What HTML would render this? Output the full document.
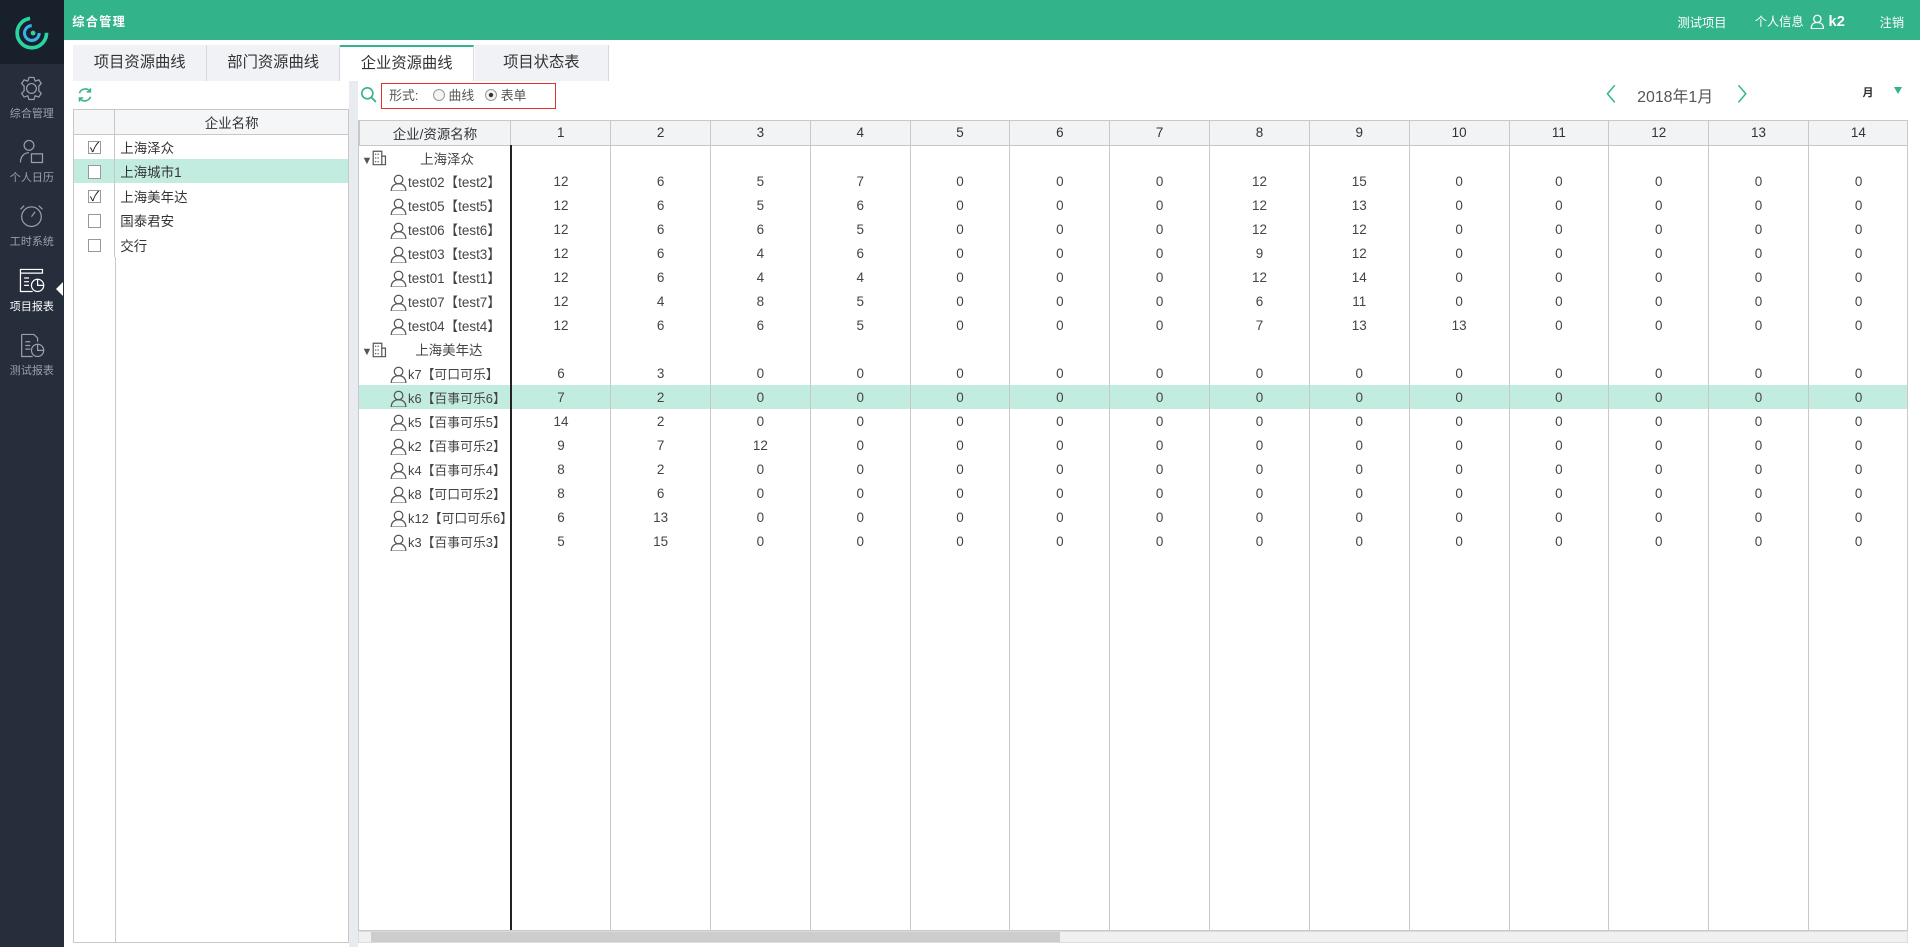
<!DOCTYPE html>
<html><head><meta charset="utf-8">
<style>
*{box-sizing:border-box;margin:0;padding:0}
html,body{width:1920px;height:947px;overflow:hidden;background:#fff}
#w{position:absolute;left:0;top:0;width:1568px;height:773px;zoom:1.22449;font-family:"Liberation Sans","Noto Sans CJK SC",sans-serif;color:#333;font-size:11px}
.a{position:absolute}
#side{left:0;top:0;width:52px;height:773px;background:#262e3b}
#logo{left:0;top:0;width:52px;height:52px;background:#17202b}
.nav{left:0;width:52px;text-align:center;color:#9aa0a8;font-size:9px}
.nav svg{display:block;margin:0 auto 3px}
#hdr{left:52px;top:0;width:1516px;height:33px;background:#33b38a;color:#fff}
.tab{top:37px;height:29px;width:109px;background:#f0f2f5;border-right:1px solid #d6d9de;text-align:center;line-height:29px;font-size:12.5px;color:#333}
.tab.on{background:#fff;border-top:2px solid #33b38a;line-height:27px}
#lp{left:60px;top:89px;width:225px;height:681px;border:1px solid #c8c8c8}
#lp table{border-collapse:collapse;width:100%}
#lp td{height:20px;border-bottom:1px solid transparent}
.cb{display:inline-block;width:11px;height:11px;border:1px solid #999;background:#fff;vertical-align:middle;position:relative;font-size:11px;line-height:9px;text-align:center;color:#222}
#split{left:285px;top:66px;width:7px;height:707px;background:#e8ebf0}
#tw{left:292px;top:98px;width:1266px;height:662px;border:1px solid #c8c8c8;overflow:hidden}
#t{border-collapse:collapse;table-layout:fixed;width:1266px}
#t th{height:20px;background:#f2f3f5;font-weight:normal;border:1px solid #c8c8c8;border-top:0;font-size:11px;color:#333;padding:0}
#t td{height:19.6px;border-left:1px solid #c8c8c8;text-align:center;font-size:11px;color:#444;white-space:nowrap;padding:0}
#t td:first-child{border-left:0;text-align:left;border-right:2px solid #222}
#t tr.hl td{background:#c3ece0}
#t tr.f td{height:320px}
.ps{display:inline-block;vertical-align:-3px;margin-right:1px}
</style></head><body><div id="w">
<div class="a" id="side"></div>
<div class="a" id="logo"><svg width="52" height="52" viewBox="0 0 52 52"><circle cx="26" cy="27" r="12" fill="none" stroke="#2ad4a0" stroke-width="3" stroke-dasharray="55 20"/><circle cx="26" cy="27" r="6" fill="none" stroke="#3ab0e8" stroke-width="2.5" stroke-dasharray="28 10"/><circle cx="27" cy="27" r="2" fill="#2ad4a0"/></svg></div>
<div class="a nav" style="top:61px"><svg width="22" height="22" viewBox="0 0 22 22"><circle cx="11" cy="11" r="4" fill="none" stroke="#9aa0a8"/><path d="M9 2h4l1 3 3-1 2 3-2 2 0 4 2 2-2 3-3-1-1 3h-4l-1-3-3 1-2-3 2-2v-4l-2-2 2-3 3 1z" fill="none" stroke="#9aa0a8"/></svg>综合管理</div>
<div class="a nav" style="top:113px"><svg width="22" height="22" viewBox="0 0 22 22"><circle cx="9" cy="6" r="4" fill="none" stroke="#9aa0a8"/><path d="M2 20c0-5 3-8 7-8M11 13h9v7h-9z" fill="none" stroke="#9aa0a8"/></svg>个人日历</div>
<div class="a nav" style="top:165px"><svg width="22" height="22" viewBox="0 0 22 22"><circle cx="11" cy="12" r="8" fill="none" stroke="#9aa0a8"/><path d="M11 12l3-4M5 3l-3 3M17 3l3 3" stroke="#9aa0a8" fill="none"/></svg>工时系统</div>
<div class="a nav" style="top:218px;color:#fff"><svg width="22" height="22" viewBox="0 0 22 22"><path d="M2 2h18v3H2zM2 5v15h10" fill="none" stroke="#fff"/><path d="M5 9h4M5 12h4M5 15h4" stroke="#fff"/><circle cx="16" cy="15" r="5" fill="none" stroke="#fff"/><path d="M16 10v5h5" stroke="#fff" fill="none"/></svg>项目报表</div>
<div class="a" style="left:46px;top:230px;width:0;height:0;border:6px solid transparent;border-right-color:#fff;border-left:0"></div>
<div class="a nav" style="top:271px"><svg width="22" height="22" viewBox="0 0 22 22"><path d="M3 2h10l3 3v3M3 2v18h9" fill="none" stroke="#9aa0a8"/><path d="M6 8h4M6 11h4M6 14h4" stroke="#9aa0a8"/><circle cx="16" cy="15" r="5" fill="none" stroke="#9aa0a8"/><path d="M16 10v5h5" stroke="#9aa0a8" fill="none"/></svg>测试报表</div>
<div class="a" id="hdr"><span class="a" style="left:7px;top:10px;font-size:10px;font-weight:bold;letter-spacing:1px">综合管理</span>
<span class="a" style="left:1318px;top:11px;font-size:10px;white-space:nowrap">测试项目</span>
<span class="a" style="left:1381px;top:10px;font-size:10px;white-space:nowrap">个人信息&nbsp;&nbsp;<svg width="12" height="12" viewBox="0 0 12 12" style="vertical-align:-2px"><circle cx="6" cy="4" r="3" fill="none" stroke="#fff"/><path d="M1 12c0-4 2-5 5-5s5 1 5 5z" fill="none" stroke="#fff"/></svg> <b style="font-size:12px">k2</b></span>
<span class="a" style="left:1483px;top:11px;font-size:10px">注销</span></div>
<div class="a tab" style="left:60px">项目资源曲线</div>
<div class="a tab" style="left:169px">部门资源曲线</div>
<div class="a tab on" style="left:278px">企业资源曲线</div>
<div class="a tab" style="left:388px">项目状态表</div>
<svg class="a" style="left:63px;top:71px" width="13" height="13" viewBox="0 0 13 13"><path d="M2 5a5 5 0 0 1 9-1M11 8a5 5 0 0 1-9 1" fill="none" stroke="#33b38a" stroke-width="1.3"/><path d="M11 1v3h-3M2 12V9h3" fill="none" stroke="#33b38a" stroke-width="1.2"/></svg>
<div class="a" id="lp"><table>
<tr style="background:#f5f6f7"><td style="width:33px;border-right:1px solid #c8c8c8;border-bottom:1px solid #c8c8c8"></td><td style="text-align:center;border-bottom:1px solid #c8c8c8">企业名称</td></tr>
<tr><td style="text-align:center;border-right:1px solid #c8c8c8"><span class="cb">✓</span></td><td style="padding-left:4px">上海泽众</td></tr>
<tr style="background:#c3ece0"><td style="text-align:center;border-right:1px solid #c8c8c8"><span class="cb"></span></td><td style="padding-left:4px">上海城市1</td></tr>
<tr><td style="text-align:center;border-right:1px solid #c8c8c8"><span class="cb">✓</span></td><td style="padding-left:4px">上海美年达</td></tr>
<tr><td style="text-align:center;border-right:1px solid #c8c8c8"><span class="cb"></span></td><td style="padding-left:4px">国泰君安</td></tr>
<tr><td style="text-align:center;border-right:1px solid #c8c8c8"><span class="cb"></span></td><td style="padding-left:4px">交行</td></tr>
</table><div class="a" style="left:33px;top:120px;width:1px;height:560px;background:#c8c8c8"></div></div>
<div class="a" id="split"></div>
<svg class="a" style="left:294px;top:70px" width="14" height="14" viewBox="0 0 14 14"><circle cx="6" cy="6" r="4.5" fill="none" stroke="#33b38a" stroke-width="1.3"/><path d="M9.5 9.5l3.5 3.5" stroke="#33b38a" stroke-width="1.5"/></svg>
<div class="a" style="left:311px;top:68px;width:143px;height:21px;border:1px solid #e03030;font-size:10.5px;color:#555;line-height:19px;padding-left:6px;white-space:nowrap">形式:&nbsp;&nbsp;&nbsp;&nbsp;<span style="display:inline-block;width:10px;height:10px;border:1px solid #999;border-radius:50%;vertical-align:-1px;background:#f4f4f4"></span> 曲线&nbsp;&nbsp;&nbsp;<span style="display:inline-block;width:10px;height:10px;border:1px solid #999;border-radius:50%;vertical-align:-1px;background:radial-gradient(#333 0 1.5px,#f4f4f4 2px)"></span> 表单</div>
<svg class="a" style="left:1311px;top:69px" width="10" height="16" viewBox="0 0 10 16"><path d="M8 1L2 8l6 7" fill="none" stroke="#33b38a" stroke-width="1.2"/></svg>
<div class="a" style="left:1337px;top:69px;font-size:13px;color:#555">2018年1月</div>
<svg class="a" style="left:1418px;top:69px" width="10" height="16" viewBox="0 0 10 16"><path d="M2 1l6 7-6 7" fill="none" stroke="#33b38a" stroke-width="1.2"/></svg>
<div class="a" style="left:1521px;top:69px;font-size:9px;font-weight:bold">月</div>
<div class="a" style="left:1547px;top:71px;width:0;height:0;border:4px solid transparent;border-top:6px solid #33b38a"></div>
<div class="a" id="tw"><table id="t">
<colgroup><col style="width:124px"><col span="14"></colgroup>
<tr><th>企业/资源名称</th><th>1</th><th>2</th><th>3</th><th>4</th><th>5</th><th>6</th><th>7</th><th>8</th><th>9</th><th>10</th><th>11</th><th>12</th><th>13</th><th>14</th></tr>
<tbody id="tb"></tbody>
</table></div>
<div class="a" style="left:292px;top:760px;width:1266px;height:10px;background:#f0f0f0;border:1px solid #ddd"></div>
<div class="a" style="left:303px;top:761px;width:563px;height:8px;background:#cdcdcd"></div>
</div>
<script>
var P='<svg class="ps" width="14" height="14" viewBox="0 0 14 14"><circle cx="7" cy="4.5" r="3.5" fill="none" stroke="#555"/><path d="M1 14c0-4 2.5-6 6-6s6 2 6 6z" fill="none" stroke="#555"/></svg>';
var B='<span style="font-size:9px;color:#555">▼</span><svg width="13" height="13" viewBox="0 0 13 13" style="vertical-align:-2px"><path d="M1 1h7v11H1zM8 5h3v7H8" fill="none" stroke="#555"/><path d="M3 3v1M5 3v1M3 6v1M5 6v1M3 9v1M5 9v1" stroke="#555"/></svg>';
var g=[["上海泽众",[["test02【test2】",[12,6,5,7,0,0,0,12,15]],["test05【test5】",[12,6,5,6,0,0,0,12,13]],["test06【test6】",[12,6,6,5,0,0,0,12,12]],["test03【test3】",[12,6,4,6,0,0,0,9,12]],["test01【test1】",[12,6,4,4,0,0,0,12,14]],["test07【test7】",[12,4,8,5,0,0,0,6,11]],["test04【test4】",[12,6,6,5,0,0,0,7,13,13]]]],
["上海美年达",[["k7【可口可乐】",[6,3]],["k6【百事可乐6】",[7,2],1],["k5【百事可乐5】",[14,2]],["k2【百事可乐2】",[9,7,12]],["k4【百事可乐4】",[8,2]],["k8【可口可乐2】",[8,6]],["k12【可口可乐6】",[6,13]],["k3【百事可乐3】",[5,15]]]]];
var h='';g.forEach(function(x){h+='<tr><td style="padding-left:2px">'+B+'<span style="margin-left:'+(x[0].length>4?22:26)+'px">'+x[0]+'</span></td>'+'<td></td>'.repeat(14)+'</tr>';
x[1].forEach(function(r){h+='<tr'+(r[2]?' class="hl"':'')+'><td style="padding-left:25px;font-size:'+(r[0][0]=='k'?'10.5px':'11px')+'">'+P+r[0]+'</td>';for(var i=0;i<14;i++)h+='<td>'+(r[1][i]||0)+'</td>';h+='</tr>';});});
h+='<tr class="f"><td></td>'+'<td></td>'.repeat(14)+'</tr>';
document.getElementById('tb').innerHTML=h;
</script>
</body></html>
